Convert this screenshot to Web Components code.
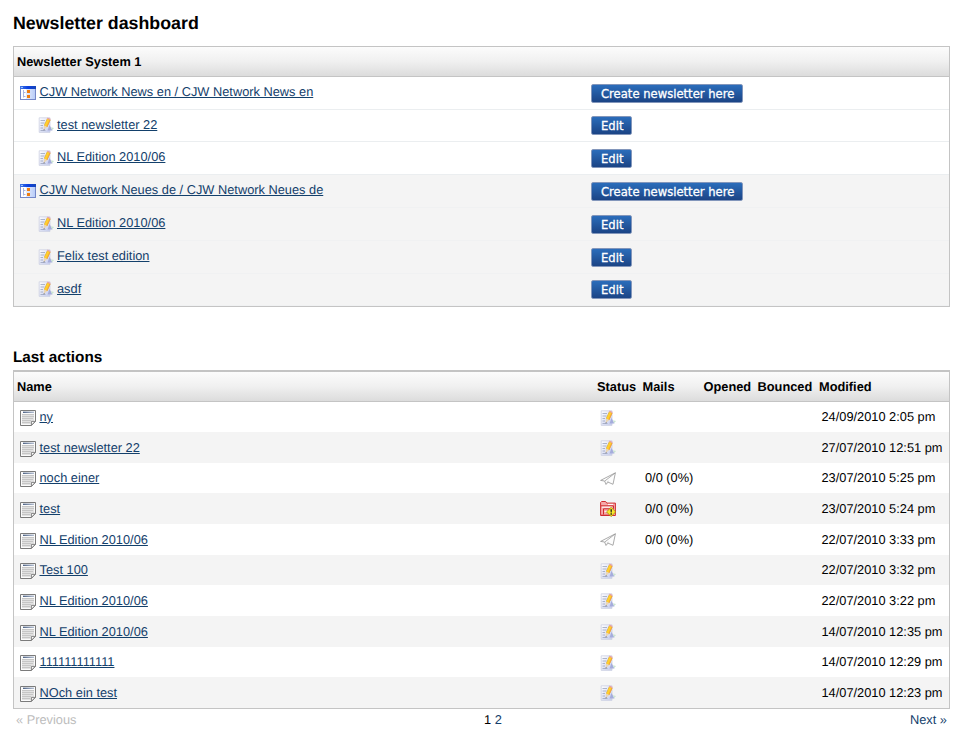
<!DOCTYPE html>
<html lang="en">
<head>
<meta charset="utf-8">
<title>Newsletter dashboard</title>
<style>
body{margin:0;background:#fff;font:12.8px/16px "Liberation Sans",Arial,sans-serif;color:#000;text-rendering:geometricPrecision}
</style>
</head>
<body>
<newsletter-dashboard></newsletter-dashboard>
<script>
const define=(name,html,init)=>{
  const t=document.createElement('template');
  t.innerHTML=html;
  customElements.define(name,class extends HTMLElement{
    constructor(){super();this.attachShadow({mode:'open'});}
    connectedCallback(){
      if(this.shadowRoot.childNodes.length)return;
      this.shadowRoot.append(t.content.cloneNode(true));
      if(init)init(this,this.shadowRoot);
    }
  });
};

const ICONS={
  system:`<defs><linearGradient id="g" x2="1"><stop stop-color="#3f78e6"/><stop offset=".5" stop-color="#0b3fe0"/><stop offset="1" stop-color="#1746b8"/></linearGradient><linearGradient id="p" x2="1"><stop stop-color="#fff"/><stop offset="1" stop-color="#b9cdf8"/></linearGradient></defs>
    <path fill="#7488c8" d="M0 1h16v14H0z"/><path fill="url(#p)" d="M1 4h14v10H1z"/><path fill="#fff" d="M1 4h5v10H1z"/><path fill="url(#g)" d="M0 1h16v3H0z"/><path fill="#9fc0ff" d="M1 2h2v1H1z"/>
    <path stroke="#a9b5de" d="M3.5 5v7.5M3.5 7.5h2M3.5 11.5h2" fill="none"/><path fill="#ee7d10" d="M7 5h3v3H7zM7 10h3v3H7z"/>`,
  draft:`<defs><linearGradient id="d" x2="1" y2="1"><stop stop-color="#fff"/><stop offset="1" stop-color="#c4cbee"/></linearGradient></defs>
    <path fill="url(#d)" stroke="#cdd1e2" stroke-width=".8" d="M1.2 .8h10.8v14.6H1.2z"/><path stroke="#9aa3be" stroke-width=".8" d="M2.5 3.5h4.5M2.5 6h4M2.5 8.5h2.5M2.5 11h2.5M2.5 13.5h5" fill="none"/>
    <path fill="#a5acdc" d="M9.5 13.5l2-5.5 3 5.5z"/><path fill="#c9e5cf" d="M13 10.2l3 .8-2 2.3z"/>
    <path stroke="#d3a24c" stroke-width="3.8" d="M10.8 2.3L7.6 9.3"/><path stroke="#ffd02c" stroke-width="3" d="M10.8 2.3L7.6 9.3"/><path stroke="#f5a040" stroke-width="1" d="M11.9 3L8.8 9.8"/><path fill="#ead5b2" d="M6 8.6l3.3 1.5-3.5 3z"/><path fill="#666" d="M5.7 12l1.1.5-1 .9z"/><path fill="#e9a0a0" d="M9.6 .6l3 1.4-.4 1.1-3.1-1.4z"/>`,
  doc:`<defs><linearGradient id="h" x2="1"><stop stop-color="#4f6486"/><stop offset="1" stop-color="#b4bfd2"/></linearGradient></defs>
    <path fill="#fbfbfb" stroke="#7b7b7b" d="M.5.5h15v11l-4 4H.5z"/><path fill="#e2e2e2" d="M2 4h12v7l-3 3H2z"/><path fill="url(#h)" d="M3 1.6h11v1.4H3z"/>
    <path stroke="#c6c6c6" d="M2 4.5h12M2 6.5h12M2 8.5h11M2 10.5h9M2 12.5h8" fill="none"/><path fill="#fff" stroke="#777" stroke-width=".9" d="M15.2 11.4l-3.8 3.8v-3.8z"/>`,
  sent:`<path fill="#fdfdfd" stroke="#969696" stroke-width=".8" stroke-linejoin="round" d="M15.4 1.8L.6 9.4l4 .6 1.4 3.4 2-2.3 5 2.2z"/><path fill="none" stroke="#969696" stroke-width=".75" d="M15.4 1.8L4.8 10"/><path fill="none" stroke="#b8b8b8" stroke-width=".7" d="M6.2 13.4l2-3.6"/>`,
  abort:`<path fill="#f5a9aa" stroke="#d12d30" stroke-linejoin="round" d="M.6 4V1.5l1-1h4l1.2 1.6h8.6v12.4H.6z"/><path stroke="#cf2c30" d="M1 4.8h12.5v3M3.5 13.5v-5.7h7M1 14.2h9" fill="none"/><path stroke="#fff" stroke-width="1" d="M2 6.2h10M4.5 10.4h3.5M8 3.4h5" fill="none"/>
    <path fill="#f8e92d" stroke="#a78a00" stroke-width=".8" d="M11.2 6.3l4.4 4.6-4.4 4.7-4.7-4.7z"/><path fill="#222" d="M10.4 8.2h1.6l-.3 3.3h-1zM10.5 12.2h1.4v1.5h-1.4z"/>`
};
define('dash-icon','<style>:host{display:block;flex:none;width:16px;height:16px}svg{display:block}</style><svg width="16" height="16" viewBox="0 0 16 16"></svg>',
  (el,r)=>{r.querySelector('svg').innerHTML=ICONS[el.getAttribute('name')];});

define('dash-link','<style>:host{display:block;white-space:nowrap}a{color:#13406b;text-decoration:underline;text-decoration-thickness:1px;text-underline-offset:1px}</style><a><slot></slot></a>');

define('dash-button',`<style>:host{display:block}
button{box-sizing:border-box;display:block;height:19px;margin:0;padding:1px 8px 0 9px;border:1px solid #8296bb;border-radius:2px;background:linear-gradient(#2b6dbb,#1b4485);color:#fff;font:11.6px/16px "DejaVu Sans",Verdana,sans-serif;white-space:nowrap;-webkit-text-stroke:.3px #fff}</style><button><slot></slot></button>`);

define('table-head',`<style>:host{box-sizing:border-box;height:30px;border-bottom:1px solid #c4c4c4;background:linear-gradient(#fcfcfc,#f0f0f0 50%,#dcdcdc);font-weight:bold;display:grid;grid-template-columns:var(--cols);align-items:center;padding-left:3px;white-space:nowrap}</style><slot></slot>`);

define('edition-row',`<style>
:host{box-sizing:border-box;height:33px;display:grid;grid-template-columns:577px 1fr;align-items:center;border-bottom:1px solid #ebeef0}
:host([short]){height:32px}:host([shade]){background:#f4f4f4;border-color:#f0f1f2}
.name{display:flex;align-items:center;gap:3.5px;padding-left:6px}:host([child]) .name{padding-left:23.5px}
.name dash-icon{margin-top:-1px}dash-link{margin-top:-3px}:host([short]) dash-link{margin-top:-1px}
</style><div class="name"><dash-icon></dash-icon><dash-link><slot></slot></dash-link></div><dash-button></dash-button>`,
(el,r)=>{
  const child=el.hasAttribute('child');
  const icon=document.createElement('dash-icon');icon.setAttribute('name',child?'draft':'system');
  r.querySelector('dash-icon').replaceWith(icon);
  r.querySelector('dash-button').textContent=child?'Edit':'Create newsletter here';
});

define('action-row',`<style>
:host{box-sizing:border-box;height:var(--h);display:grid;grid-template-columns:586px 45px 176.5px 1fr;align-items:center;white-space:nowrap}
:host([shade]){background:#f4f4f4}
.name{display:flex;align-items:center;gap:3.5px;padding-left:6px}.name dash-icon{margin-top:2px}
.st{padding-top:1px}
</style><div class="name"><dash-icon name="doc"></dash-icon><dash-link><slot></slot></dash-link></div><div class="st"></div><span class="mails"></span><span class="date"></span>`,
(el,r)=>{
  const icon=document.createElement('dash-icon');icon.setAttribute('name',el.getAttribute('status'));
  r.querySelector('.st').append(icon);
  r.querySelector('.mails').textContent=el.getAttribute('mails')||'';
  r.querySelector('.date').textContent=el.getAttribute('date');
});

define('dash-panel','<style>:host{display:block;box-sizing:border-box;border:1px solid #c4c4c4}</style><slot></slot>');

define('dash-pager',`<style>:host{display:grid;grid-template-columns:468px auto 1fr;padding:3px 3px 0;color:#13406b}
.p{color:#bcbcbc}.c b{font-weight:normal;color:#000}.n{text-align:right}</style>
<span class="p">« Previous</span><span class="c"><b>1</b> 2</span><span class="n">Next »</span>`);

define('newsletter-dashboard',`<style>
:host{display:block;box-sizing:border-box;width:950px;height:737px;padding:12px 0 0 13px;overflow:hidden}
h1{margin:0;height:34px;font-size:17.8px;line-height:22px}
h2{margin:0;padding-top:42px;height:21px;font-size:15.3px;line-height:18px}
.sys{--cols:1fr}
.act{border-top-width:2px;--cols:580px 45.5px 61px 54px 61.5px 1fr}
</style>
<h1>Newsletter dashboard</h1>
<dash-panel class="sys">
<table-head><span>Newsletter System 1</span></table-head>
<edition-row>CJW Network News en / CJW Network News en</edition-row>
<edition-row child short>test newsletter 22</edition-row>
<edition-row child>NL Edition 2010/06</edition-row>
<edition-row shade>CJW Network Neues de / CJW Network Neues de</edition-row>
<edition-row child shade>NL Edition 2010/06</edition-row>
<edition-row child shade>Felix test edition</edition-row>
<edition-row child shade short>asdf</edition-row>
</dash-panel>
<h2>Last actions</h2>
<dash-panel class="act">
<table-head><span>Name</span><span>Status</span><span>Mails</span><span>Opened</span><span>Bounced</span><span>Modified</span></table-head>
</dash-panel>
<dash-pager></dash-pager>`,
(el,r)=>{
  const panel=r.querySelector('.act');
  [['ny','draft','','24/09/2010 2:05 pm',30],
   ['test newsletter 22','draft','','27/07/2010 12:51 pm',31],
   ['noch einer','sent','0/0 (0%)','23/07/2010 5:25 pm',30],
   ['test','abort','0/0 (0%)','23/07/2010 5:24 pm',31],
   ['NL Edition 2010/06','sent','0/0 (0%)','22/07/2010 3:33 pm',31],
   ['Test 100','draft','','22/07/2010 3:32 pm',30],
   ['NL Edition 2010/06','draft','','22/07/2010 3:22 pm',31],
   ['NL Edition 2010/06','draft','','14/07/2010 12:35 pm',31],
   ['111111111111','draft','','14/07/2010 12:29 pm',30],
   ['NOch ein test','draft','','14/07/2010 12:23 pm',31]
  ].forEach(([name,status,mails,date,h],i)=>{
    const row=document.createElement('action-row');
    row.textContent=name;
    row.setAttribute('status',status);row.setAttribute('mails',mails);row.setAttribute('date',date);
    row.style.setProperty('--h',h+'px');
    if(i%2)row.setAttribute('shade','');
    panel.append(row);
  });
});
</script>
</body>
</html>
